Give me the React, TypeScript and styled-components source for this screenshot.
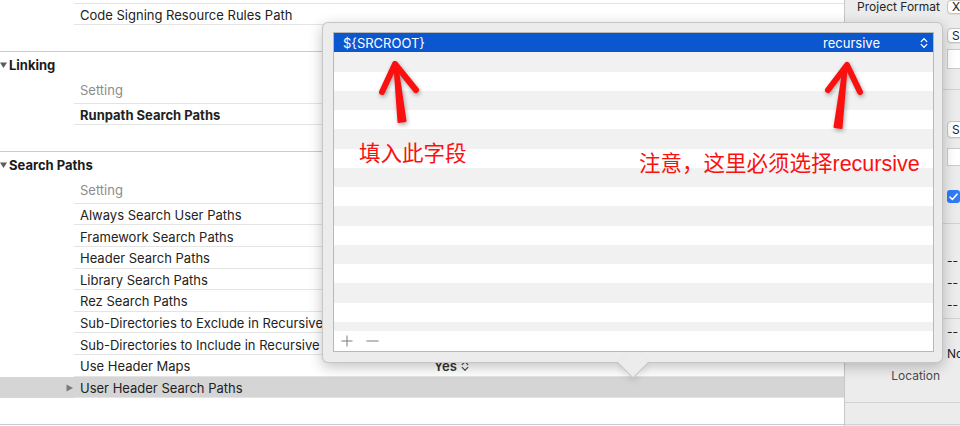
import React from 'react';
import styled, { createGlobalStyle } from 'styled-components';

const GlobalStyle = createGlobalStyle`
  html, body {
    margin: 0;
    padding: 0;
  }
  body {
    font-family: Inter, 'Liberation Sans', sans-serif;
    font-size: 13px;
    color: #222;
    background: #fff;
  }
`;

type TRow = {
  name: string;
  value?: string;
  selected?: boolean;
  expandable?: boolean;
};

type TSection = {
  title?: string;
  rows: TRow[];
};

const sections: TSection[] = [
  {
    rows: [{ name: 'Code Signing Resource Rules Path' }],
  },
  {
    title: 'Linking',
    rows: [{ name: 'Runpath Search Paths' }],
  },
  {
    title: 'Search Paths',
    rows: [
      { name: 'Always Search User Paths' },
      { name: 'Framework Search Paths' },
      { name: 'Header Search Paths' },
      { name: 'Library Search Paths' },
      { name: 'Rez Search Paths' },
      { name: 'Sub-Directories to Exclude in Recursive Searches' },
      { name: 'Sub-Directories to Include in Recursive Searches' },
      { name: 'Use Header Maps', value: 'Yes' },
      { name: 'User Header Search Paths', selected: true, expandable: true },
    ],
  },
];

const pathRows = ['${SRCROOT}', '', '', '', '', '', '', '', '', '', '', '', '', '', '', ''];

function ChevronUpDown({ color }: { color: string }): JSX.Element {
  return (
    <svg width='8' height='12' viewBox='0 0 8 12' fill='none' stroke={color} strokeWidth='1.3' strokeLinecap='round' strokeLinejoin='round'>
      <path d='M1.2 4.6 L4 1.6 L6.8 4.6' />
      <path d='M1.2 7.4 L4 10.4 L6.8 7.4' />
    </svg>
  );
}

function Disclosure({ open }: { open: boolean }): JSX.Element {
  return (
    <svg width='7' height='8' viewBox='0 0 7 8'>
      {open ? <path d='M0 1.5 L7 1.5 L3.5 7 Z' fill='#5c5c5c' /> : <path d='M0.5 0.5 L7 4 L0.5 7.5 Z' fill='#7a7a7a' />}
    </svg>
  );
}

function App(): JSX.Element {
  return (
    <Window>
      <GlobalStyle />
      <Editor>
        {/* bottom edge of the row scrolled out of view */}
        <ScrollEdge>
          <Gutter />
          <Cells />
        </ScrollEdge>
        {sections.map((section, si) => (
          <Section key={si}>
            {section.title && (
              <>
                <SectionHeader>
                  <Disclosure open />
                  <span>{section.title}</span>
                </SectionHeader>
                <ColumnHeader>
                  <Gutter />
                  <Cells>
                    <ColumnTitle>Setting</ColumnTitle>
                  </Cells>
                </ColumnHeader>
              </>
            )}
            {section.rows.map((row) => (
              <Row key={row.name} $selected={row.selected}>
                <Gutter>{row.expandable && <Disclosure open={false} />}</Gutter>
                <Cells $lift>
                  <Name $bold={section.title === 'Linking'}>{row.name}</Name>
                  {row.value && (
                    <Value>
                      {row.value}
                      <ChevronUpDown color='#555' />
                    </Value>
                  )}
                </Cells>
              </Row>
            ))}
          </Section>
        ))}
      </Editor>

      <Inspector>
        <InspectorGroup $top={-1} $bottom={20}>
          <Field $gap={14}>
            <Label>Project Format</Label>
            <PushButton>Xcode 3.2-compatible</PushButton>
          </Field>
          <Field $gap={6}>
            <Label>Organization</Label>
            <PushButton $h={15}>Shared</PushButton>
          </Field>
          <Field>
            <Label>Class Prefix</Label>
            <TextField $h={20} />
          </Field>
        </InspectorGroup>
        <InspectorGroup $top={31} $bottom={20}>
          <Field $gap={10}>
            <Label>Indent Using</Label>
            <PushButton $h={17}>Spaces</PushButton>
          </Field>
          <Field $gap={24}>
            <Label>Widths</Label>
            <TextField $h={18} />
          </Field>
          <Field>
            <Label />
            <Checkbox>
              <svg width='9' height='8' viewBox='0 0 9 8' fill='none' stroke='#fff' strokeWidth='1.6' strokeLinecap='round' strokeLinejoin='round'>
                <path d='M1 4.2 L3.4 6.5 L8 1.2' />
              </svg>
            </Checkbox>
          </Field>
        </InspectorGroup>
        <InspectorGroup $top={25} $bottom={3}>
          <TextLine>
            <Label>Bundle</Label>
            <span>--</span>
          </TextLine>
          <TextLine>
            <Label>Version</Label>
            <span>--</span>
          </TextLine>
          <TextLine>
            <Label>Build</Label>
            <span>--</span>
          </TextLine>
        </InspectorGroup>
        <InspectorGroup $top={1} $bottom={16}>
          <TextLine>
            <Label>Repository</Label>
            <span>--</span>
          </TextLine>
          <TextLine>
            <Label>Tracked</Label>
            <span>No</span>
          </TextLine>
          <TextLine>
            <Label $muted>Location</Label>
            <span />
          </TextLine>
        </InspectorGroup>
        <InspectorGroup $top={0} $bottom={21} />
      </Inspector>

      <Popover>
        <PathTable>
          <PathList>
            {pathRows.map((p, i) => (
              <PathRow key={i} $selected={i === 0} $stripe={i % 2 === 1}>
                <span>{p}</span>
                {i === 0 && (
                  <PathMode>
                    <span>recursive</span>
                    <ChevronUpDown color='#fff' />
                  </PathMode>
                )}
              </PathRow>
            ))}
          </PathList>
          <TableFooter>
            <svg width='12' height='12' viewBox='0 0 12 12' stroke='#7a7a7a' strokeWidth='1'>
              <path d='M6 0.5 V11.5 M0.5 6 H11.5' />
            </svg>
            <svg width='13' height='12' viewBox='0 0 13 12' stroke='#7a7a7a' strokeWidth='1'>
              <path d='M0.5 6 H12.5' />
            </svg>
          </TableFooter>
        </PathTable>
      </Popover>

      <Marks width='960' height='426' viewBox='0 0 960 426'>
        <g fill='#fb1010' stroke='#fb1010' strokeLinecap='round' strokeLinejoin='round'>
          <path d='M398.5 122 L405.5 121 L397.5 67 L394.5 67 Z' strokeWidth='2' />
          <path d='M382 92 L395 64 L416 90' fill='none' strokeWidth='6' />
          <path d='M834.5 127 L841.5 128 L846.5 69 L843.5 69 Z' strokeWidth='2' />
          <path d='M828 90 L847 65 L860 92' fill='none' strokeWidth='6' />
        </g>
      </Marks>
      <Note $left={359} $top={140}>填入此字段</Note>
      <Note $left={639} $top={150}>注意，这里必须选择recursive</Note>
    </Window>
  );
}

export default App;

const Window = styled.div`
  position: relative;
  display: flex;
  width: 960px;
  height: 426px;
  overflow: hidden;
  background: #fff;
`;

const Editor = styled.div`
  width: 844px;
  flex-shrink: 0;
  border-right: 1px solid #c6c6c6;
  background: #fff;
  overflow: hidden;
`;

const ScrollEdge = styled.div`
  display: flex;
  height: 3.6px;
`;

const Section = styled.section`
  padding-bottom: 25.5px;
  border-bottom: 1px solid #cbcbcb;
`;

const SectionHeader = styled.div`
  display: flex;
  align-items: center;
  gap: 2px;
  height: 26px;
  font-weight: 700;
  color: #1a1a1a;
  svg {
    margin-top: 1px;
  }
`;

const Row = styled.div<{ $selected?: boolean }>`
  display: flex;
  height: 21.6px;
  background: ${(p) => (p.$selected ? '#d5d5d5' : 'transparent')};
`;

const ColumnHeader = styled.div`
  display: flex;
  height: 26px;
`;

const Gutter = styled.div`
  width: 74px;
  flex-shrink: 0;
  display: flex;
  align-items: center;
  justify-content: flex-end;
  svg {
    margin-right: 1px;
    margin-top: 1px;
  }
`;

const Cells = styled.div<{ $lift?: boolean }>`
  flex: 1;
  display: flex;
  align-items: center;
  padding-top: ${(p) => (p.$lift ? 2 : 0)}px;
  border-bottom: 1px solid #e4e4e4;
  box-sizing: border-box;
`;

const ColumnTitle = styled.div`
  padding-left: 6px;
  color: #8c8c8c;
`;

const Name = styled.div<{ $bold?: boolean }>`
  width: 354px;
  box-sizing: border-box;
  padding-left: 6px;
  white-space: nowrap;
  overflow: hidden;
  font-weight: ${(p) => (p.$bold ? 700 : 400)};
  color: #222;
`;

const Value = styled.div`
  display: flex;
  align-items: center;
  gap: 4px;
  padding-left: 6px;
  font-weight: 600;
  color: #333;
`;

const Inspector = styled.aside`
  width: 115px;
  flex-shrink: 0;
  background: #ececec;
  display: flex;
  flex-direction: column;
  overflow: hidden;
  font-size: 12px;
`;

const InspectorGroup = styled.div<{ $top: number; $bottom: number }>`
  display: flex;
  flex-direction: column;
  padding-top: ${(p) => Math.max(p.$top, 0)}px;
  margin-top: ${(p) => Math.min(p.$top, 0)}px;
  padding-bottom: ${(p) => p.$bottom}px;
  border-bottom: 1px solid #d2d2d2;
`;

const Field = styled.div<{ $gap?: number }>`
  display: grid;
  grid-template-columns: 95px 60px;
  column-gap: 7px;
  align-items: center;
  margin-bottom: ${(p) => p.$gap ?? 0}px;
`;

const TextLine = styled.div`
  display: grid;
  grid-template-columns: 95px 60px;
  column-gap: 7px;
  align-items: center;
  height: 22px;
  color: #222;
`;

const Label = styled.div<{ $muted?: boolean }>`
  text-align: right;
  white-space: nowrap;
  color: ${(p) => (p.$muted ? '#4a4a4a' : '#262626')};
`;

const PushButton = styled.div<{ $h?: number }>`
  height: ${(p) => p.$h ?? 14}px;
  box-sizing: border-box;
  display: flex;
  align-items: center;
  padding: 0 4px;
  border: 1px solid #c4c4c4;
  border-radius: 4px;
  background: #fff;
  white-space: nowrap;
  font-size: 12px;
  color: #222;
  box-shadow: 0 1px 0 rgba(0, 0, 0, 0.06);
`;

const TextField = styled.div<{ $h: number }>`
  height: ${(p) => p.$h}px;
  box-sizing: border-box;
  border: 1px solid #cacaca;
  background: #fff;
`;

const Checkbox = styled.div`
  width: 13px;
  height: 13px;
  border-radius: 3px;
  background: #2f7cf6;
  display: flex;
  align-items: center;
  justify-content: center;
`;

const Popover = styled.div`
  position: absolute;
  z-index: 1;
  left: 322px;
  top: 22px;
  width: 621px;
  height: 341px;
  box-sizing: border-box;
  padding: 9px 8px 10px 10px;
  display: flex;
  background: #ececec;
  border: 1px solid rgba(0, 0, 0, 0.16);
  border-radius: 6px;
  box-shadow: 0 4px 14px rgba(0, 0, 0, 0.24);

  &::after {
    content: '';
    position: absolute;
    left: 299px;
    bottom: -11.5px;
    width: 21px;
    height: 21px;
    background: #ececec;
    border-right: 1px solid rgba(0, 0, 0, 0.16);
    border-bottom: 1px solid rgba(0, 0, 0, 0.16);
    transform: rotate(45deg);
    box-shadow: 3px 3px 6px rgba(0, 0, 0, 0.08);
  }
`;

const PathTable = styled.div`
  position: relative;
  z-index: 1;
  flex: 1;
  display: flex;
  flex-direction: column;
  border: 1px solid #b8b8b8;
  background: #fff;
`;

const PathList = styled.div`
  flex: 1;
  overflow: hidden;
`;

const PathRow = styled.div<{ $selected?: boolean; $stripe?: boolean }>`
  height: 19.25px;
  display: flex;
  align-items: center;
  justify-content: space-between;
  padding: 0 5px 0 9px;
  background: ${(p) => (p.$selected ? '#0b57cf' : p.$stripe ? '#f1f1f1' : '#fff')};
  color: ${(p) => (p.$selected ? '#fff' : '#262626')};
`;

const PathMode = styled.div`
  display: flex;
  align-items: center;
  gap: 40px;
`;

const TableFooter = styled.div`
  height: 20px;
  flex-shrink: 0;
  display: flex;
  align-items: center;
  gap: 13px;
  padding-left: 7px;
  background: #fff;
`;

const Marks = styled.svg`
  position: absolute;
  z-index: 2;
  left: 0;
  top: 0;
  pointer-events: none;
  filter: drop-shadow(1px 2px 2px rgba(0, 0, 0, 0.35));
`;

const Note = styled.div<{ $left: number; $top: number }>`
  position: absolute;
  z-index: 2;
  left: ${(p) => p.$left}px;
  top: ${(p) => p.$top}px;
  font-family: 'Liberation Sans', 'Noto Sans CJK SC', sans-serif;
  font-size: 21.5px;
  line-height: 28px;
  color: #fb1010;
  white-space: nowrap;
`;
